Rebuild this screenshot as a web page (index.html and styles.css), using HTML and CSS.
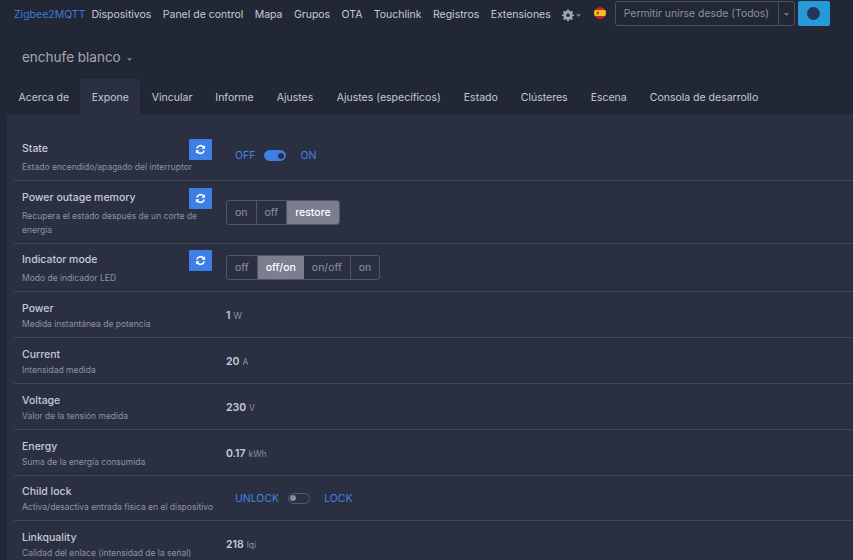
FILE: index.html
```html
<!DOCTYPE html>
<html>
<head>
<meta charset="utf-8">
<title>Zigbee2MQTT</title>
<link rel="stylesheet" href="styles.css">
</head>
<body>
  <nav class="navbar">
    <a class="brand">Zigbee2MQTT</a>
    <ul class="nav-links">
      <li>Dispositivos</li>
      <li>Panel de control</li>
      <li>Mapa</li>
      <li>Grupos</li>
      <li>OTA</li>
      <li>Touchlink</li>
      <li>Registros</li>
      <li>Extensiones</li>
    </ul>
    <div class="settings">
      <svg class="gear" viewBox="0 0 24 24"><path fill-rule="evenodd" d="M10 1h4l.6 3.2 1.900.8 2.700-1.900 2.800 2.800-1.900 2.700.8 1.900L24 11v3l-3.100.6-.8 1.900 1.900 2.700-2.800 2.800-2.700-1.900-1.900.8L14 24h-4l-.6-3.100-1.900-.8-2.700 1.900-2.800-2.800 1.900-2.700-.8-1.900L0 14v-3l3.100-.5.8-1.900L2 5.900l2.800-2.800 2.700 1.900 1.900-.8zM12 9a3.500 3.500 0 1 0 0 7 3.500 3.500 0 0 0 0-7z"/></svg>
      <span class="caret"></span>
    </div>
    <svg class="flag" viewBox="0 0 12 12">
      <clipPath id="flag-clip"><circle cx="6" cy="6" r="6"/></clipPath>
      <g clip-path="url(#flag-clip)">
        <rect width="12" height="12" fill="#c8202c"/>
        <rect y="3" width="12" height="6" fill="#f5bf1c"/>
        <rect x="2.500" y="4.500" width="2.500" height="3" fill="#b5522a"/>
      </g>
    </svg>
    <div class="permit">
      <span class="permit-label">Permitir unirse desde (Todos)</span>
      <span class="permit-toggle"><span class="caret"></span></span>
    </div>
    <div class="theme-btn"><span class="theme-dot"></span></div>
  </nav>

  <div class="device-title">enchufe blanco <span class="caret"></span></div>

  <ul class="tabs">
    <li>Acerca de</li>
    <li class="active">Expone</li>
    <li>Vincular</li>
    <li>Informe</li>
    <li class="tab-wide">Ajustes</li>
    <li>Ajustes (específicos)</li>
    <li>Estado</li>
    <li>Clústeres</li>
    <li>Escena</li>
    <li>Consola de desarrollo</li>
  </ul>

  <div class="card">
    <div class="row row-first">
      <div class="label has-refresh">
        <div class="label-text"><h4>State</h4><p>Estado encendido/apagado del interruptor</p></div>
        <button class="refresh"><svg viewBox="0 0 24 24"><path d="M4 10A8.500 8.500 0 0 1 18.500 6.500L20.500 8.500M20 14a8.500 8.500 0 0 1-14.500 3.500l-2-2"/><path class="tip" d="M22 2.500v8h-8zM2 21.500v-8h8z"/></svg></button>
      </div>
      <div class="toggle-wrap">
        <span class="toggle-word">OFF</span>
        <span class="switch on"></span>
        <span class="toggle-word">ON</span>
      </div>
    </div>

    <div class="row row-tall">
      <div class="label has-refresh">
        <div class="label-text"><h4>Power outage memory</h4><p>Recupera el estado después de un corte de energía</p></div>
        <button class="refresh"><svg viewBox="0 0 24 24"><path d="M4 10A8.500 8.500 0 0 1 18.500 6.500L20.500 8.500M20 14a8.500 8.500 0 0 1-14.500 3.500l-2-2"/><path class="tip" d="M22 2.500v8h-8zM2 21.500v-8h8z"/></svg></button>
      </div>
      <div class="btn-group">
        <span>on</span><span>off</span><span class="selected">restore</span>
      </div>
    </div>

    <div class="row row-mode">
      <div class="label has-refresh">
        <div class="label-text"><h4>Indicator mode</h4><p>Modo de indicador LED</p></div>
        <button class="refresh"><svg viewBox="0 0 24 24"><path d="M4 10A8.500 8.500 0 0 1 18.500 6.500L20.500 8.500M20 14a8.500 8.500 0 0 1-14.500 3.500l-2-2"/><path class="tip" d="M22 2.500v8h-8zM2 21.500v-8h8z"/></svg></button>
      </div>
      <div class="btn-group">
        <span>off</span><span class="selected">off/on</span><span>on/off</span><span>on</span>
      </div>
    </div>

    <div class="row">
      <div class="label"><div class="label-text"><h4>Power</h4><p>Medida instantánea de potencia</p></div></div>
      <div class="reading"><b>1</b> <small>W</small></div>
    </div>
    <div class="row">
      <div class="label"><div class="label-text"><h4>Current</h4><p>Intensidad medida</p></div></div>
      <div class="reading"><b>20</b> <small>A</small></div>
    </div>
    <div class="row">
      <div class="label"><div class="label-text"><h4>Voltage</h4><p>Valor de la tensión medida</p></div></div>
      <div class="reading"><b>230</b> <small>V</small></div>
    </div>
    <div class="row">
      <div class="label"><div class="label-text"><h4>Energy</h4><p>Suma de la energía consumida</p></div></div>
      <div class="reading"><b>0.17</b> <small>kWh</small></div>
    </div>
    <div class="row row-lock">
      <div class="label"><div class="label-text"><h4>Child lock</h4><p>Activa/desactiva entrada física en el dispositivo</p></div></div>
      <div class="toggle-wrap">
        <span class="toggle-word">UNLOCK</span>
        <span class="switch"></span>
        <span class="toggle-word">LOCK</span>
      </div>
    </div>
    <div class="row">
      <div class="label"><div class="label-text"><h4>Linkquality</h4><p>Calidad del enlace (intensidad de la señal)</p></div></div>
      <div class="reading"><b>218</b> <small>lqi</small></div>
    </div>
  </div>
</body>
</html>
```

FILE: styles.css
```css
* {
  padding: 0;
  margin: 0;
  box-sizing: border-box;
}

html, body {
  height: 560px;
  overflow: hidden;
}

body {
  background: #222736;
  color: #c6cad6;
  font-family: Inter, "Noto Sans", sans-serif;
  font-size: 10.5px;
}

ul {
  list-style: none;
}

.caret {
  display: inline-block;
  width: 3px;
  height: 3px;
  border-right: 1px solid #9ea3b2;
  border-bottom: 1px solid #9ea3b2;
  transform: rotate(45deg);
}

.navbar {
  display: flex;
  align-items: center;
  height: 27px;
  margin-top: 1px;
  padding-left: 14px;
}

.brand {
  color: #3d78d8;
  font-size: 10.5px;
  margin-right: 6px;
}

.nav-links {
  display: flex;
  gap: 11.4px;
}

.settings {
  display: flex;
  align-items: center;
  gap: 3px;
  margin-left: 11px;
}

.gear {
  width: 12px;
  height: 12px;
  fill: #a0a5b3;
}

.flag {
  width: 12px;
  height: 12px;
  margin-left: 14px;
  margin-top: -3px;
}

.permit {
  display: flex;
  align-items: stretch;
  align-self: flex-start;
  height: 25px;
  margin-left: 9px;
  border: 1px solid #4a5062;
  border-radius: 3px;
  color: #8c909e;
}

.permit-label {
  display: flex;
  align-items: center;
  width: 162px;
  padding-left: 8px;
  white-space: nowrap;
  font-size: 10.4px;
}

.permit-toggle {
  display: flex;
  align-items: center;
  justify-content: center;
  width: 16px;
  border-left: 1px solid #4a5062;
}

.theme-btn {
  display: flex;
  align-items: center;
  justify-content: center;
  align-self: flex-start;
  width: 32px;
  height: 25px;
  margin-left: 3px;
  background: #259ad6;
  border-radius: 2px;
}

.theme-dot {
  width: 13px;
  height: 13px;
  border-radius: 50%;
  background: #22355f;
}

.device-title {
  margin-top: 19px;
  padding-left: 22px;
  font-size: 13.5px;
  line-height: 20px;
  color: #a4a9b6;
}

.device-title .caret {
  margin-left: 3px;
  margin-bottom: 2px;
}

.tabs {
  display: flex;
  margin-top: 12px;
  padding-left: 7px;
  height: 35px;
}

.tabs li {
  display: flex;
  align-items: center;
  padding: 1px 11.5px 0;
}

.tabs li:first-child {
  padding-right: 11px;
}

.tabs li.tab-wide {
  padding-right: 12px;
}

.tabs li.active {
  background: #2a3042;
  border-radius: 3px 3px 0 0;
}

.card {
  background: #2a3042;
  margin-left: 7px;
  padding: 20px 0 0 7px;
  height: 446px;
}

.row {
  display: flex;
  align-items: center;
  height: 46px;
  border-bottom: 1px solid #3f4659;
}

.row-first {
  height: 47px;
}

.row-first .label {
  padding-top: 2px;
}

.row-first .toggle-wrap {
  padding-bottom: 3px;
}

.row-tall {
  height: 63px;
}

.row-tall .label {
  padding-top: 4px;
}

.row-mode {
  height: 48px;
}

.row-mode .label {
  padding-top: 2px;
}

.row-lock {
  height: 45px;
}

.label {
  display: flex;
  align-items: flex-start;
  width: 212px;
  padding-left: 8px;
  padding-top: 3px;
  flex-shrink: 0;
}

.label-text {
  width: 192px;
  flex-shrink: 0;
}

.label h4 {
  font-size: 10.5px;
  font-weight: 500;
  line-height: 14px;
  color: #c6cad6;
  margin-bottom: 1px;
}

.label.has-refresh h4 {
  margin-bottom: 4px;
}

.label p {
  font-size: 8.5px;
  line-height: 14px;
  color: #8e92a0;
}

.refresh {
  display: flex;
  align-items: center;
  justify-content: center;
  flex-shrink: 0;
  width: 23px;
  height: 21px;
  margin-left: -25px;
  margin-top: -3px;
  background: #3d7fe6;
  border: 0;
  border-radius: 1px;
}

.refresh svg {
  width: 11px;
  height: 11px;
  fill: none;
  stroke: #fff;
  stroke-width: 3.5;
}

.refresh .tip {
  fill: #fff;
  stroke: none;
}

.toggle-wrap {
  display: flex;
  align-items: center;
  padding-left: 9px;
  gap: 9px;
  color: #4282e0;
  font-size: 10.5px;
}

.toggle-word:last-child {
  margin-left: 5px;
}

.switch {
  position: relative;
  width: 22px;
  height: 11px;
  border-radius: 6px;
  border: 1px solid #555c70;
}

.switch::after {
  content: "";
  position: absolute;
  left: 1px;
  top: 1.500px;
  width: 6px;
  height: 6px;
  border-radius: 50%;
  background: #8a8e9c;
}

.switch.on {
  background: #3d7fe6;
  border-color: #3d7fe6;
}

.switch.on::after {
  left: auto;
  right: 1.500px;
  background: #2a3042;
}

.btn-group {
  display: flex;
  height: 25px;
  border: 1px solid #4f5669;
  border-radius: 3px;
  overflow: hidden;
  color: #8e92a0;
}

.btn-group span {
  display: flex;
  align-items: center;
  padding: 0 8px;
  border-right: 1px solid #4f5669;
}

.btn-group span:last-child {
  border-right: 0;
}

.btn-group .selected {
  background: #7a7e8f;
  color: #fff;
  font-weight: 500;
  border-right: 0;
}

.reading {
  padding-top: 2px;
  font-size: 10.5px;
  color: #a4a9b6;
}

.reading b {
  font-weight: 600;
  color: #c6cad6;
}

.reading small {
  font-size: 8.500px;
  color: #8e92a0;
}
```
